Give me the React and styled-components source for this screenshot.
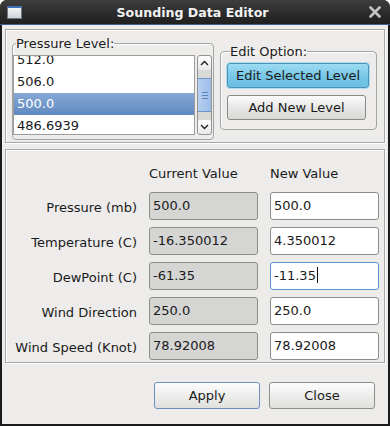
import React from 'react';
import styled, { createGlobalStyle, css } from 'styled-components';

const GlobalStyle = createGlobalStyle`
    html, body {
        margin: 0;
        padding: 0;
        background: #ffffff;
    }
    body {
        font-family: "DejaVu Sans", "Liberation Sans", sans-serif;
        font-size: 13px;
        color: #1a1a1a;
    }
`;

const levels = ['512.0', '506.0', '500.0', '486.6939'];

const rows = [
    { label: 'Pressure (mb)', current: '500.0', next: '500.0' },
    { label: 'Temperature (C)', current: '-16.350012', next: '4.350012' },
    { label: 'DewPoint (C)', current: '-61.35', next: '-11.35', active: true },
    { label: 'Wind Direction', current: '250.0', next: '250.0' },
    { label: 'Wind Speed (Knot)', current: '78.92008', next: '78.92008' },
];

const App = () => (
    <>
        <GlobalStyle />
        <Window>
            <TitleBar>
                <WindowIcon />
                <Title>Sounding Data Editor</Title>
                <CloseIcon width="12" height="12" viewBox="0 0 12 12">
                    <path d="M1.5 1.5 L10.5 10.5 M10.5 1.5 L1.5 10.5" stroke="#c4c4c4" strokeWidth="2.6" strokeLinecap="round" />
                </CloseIcon>
            </TitleBar>
            <Body>
                <TopPanel>
                    <LevelGroup>
                        <Legend>Pressure Level:</Legend>
                        <ListRow>
                            <ListBox>
                                <ListInner>
                                    {levels.map(level => (
                                        <ListItem key={level} selected={level === '500.0'}>{level}</ListItem>
                                    ))}
                                </ListInner>
                            </ListBox>
                            <ScrollBar>
                                <ArrowButton>
                                    <svg width="9" height="6" viewBox="0 0 9 6">
                                        <path d="M1 5 L4.5 1.5 L8 5" stroke="#222" strokeWidth="1.4" fill="none" />
                                    </svg>
                                </ArrowButton>
                                <Track>
                                    <Thumb>
                                        <Grip />
                                        <Grip />
                                        <Grip />
                                    </Thumb>
                                </Track>
                                <ArrowButton>
                                    <svg width="9" height="6" viewBox="0 0 9 6">
                                        <path d="M1 1 L4.5 4.5 L8 1" stroke="#222" strokeWidth="1.4" fill="none" />
                                    </svg>
                                </ArrowButton>
                            </ScrollBar>
                        </ListRow>
                    </LevelGroup>
                    <EditGroup>
                        <Legend>Edit Option:</Legend>
                        <Button primary width={142}>Edit Selected Level</Button>
                        <Button width={139}>Add New Level</Button>
                    </EditGroup>
                </TopPanel>
                <ValuePanel>
                    <span />
                    <ColumnHead>Current Value</ColumnHead>
                    <ColumnHead>New Value</ColumnHead>
                    {rows.map(row => (
                        <React.Fragment key={row.label}>
                            <FieldLabel>{row.label}</FieldLabel>
                            <Field readOnlyStyle>{row.current}</Field>
                            <Field active={row.active}>
                                {row.next}
                                {row.active && <Caret />}
                            </Field>
                        </React.Fragment>
                    ))}
                </ValuePanel>
                <Actions>
                    <ActionButton isDefault>Apply</ActionButton>
                    <ActionButton>Close</ActionButton>
                </Actions>
            </Body>
        </Window>
    </>
);

const Window = styled.div`
    width: 390px;
    height: 426px;
    box-sizing: border-box;
    background: #1b1b1b;
    border-radius: 7px 7px 0 0;
    padding: 0 2px 2px 2px;
    display: flex;
    flex-direction: column;
    overflow: hidden;
`;

const TitleBar = styled.div`
    height: 24px;
    flex-shrink: 0;
    margin: 0 -2px;
    padding: 0 9px 0 7px;
    display: flex;
    align-items: center;
    background: linear-gradient(#3e3e3e, #2a2a2a 60%, #202020);
    border-bottom: 1px solid #3f5f8c;
`;

const WindowIcon = styled.div`
    width: 13px;
    height: 10px;
    background: linear-gradient(#f4f4f4, #cfd4da);
    border: 1px solid #6f7782;
    border-top: 2px solid #3f6fb8;
`;

const Title = styled.div`
    flex: 1;
    text-align: center;
    color: #f2f2f2;
    font-weight: bold;
    font-size: 12.6px;
    padding-right: 6px;
`;

const CloseIcon = styled.svg`
    display: block;
`;

const Body = styled.div`
    flex: 1;
    background: #edeceb;
    padding: 4px 3px 0 3px;
    display: flex;
    flex-direction: column;
`;

const etched = css`
    border: 1px solid #a8a8a6;
    box-shadow: inset 1px 1px 0 #ffffff, 1px 1px 0 #ffffff;
`;

const TopPanel = styled.div`
    ${etched};
    height: 114px;
    box-sizing: border-box;
    display: flex;
    align-items: flex-start;
    padding: 0 0 0 6px;
`;

const Group = styled.fieldset`
    margin: 0;
    border: 1px solid #a4a4a2;
    border-radius: 4px;
    box-shadow: 1px 1px 0 #ffffff inset;
    min-width: 0;
`;

const Legend = styled.legend`
    padding: 0;
    margin-left: 3px;
    font-size: 13px;
    line-height: 15px;
    color: #1a1a1a;
`;

const LevelGroup = styled(Group)`
    width: 202px;
    height: 104px;
    box-sizing: border-box;
    padding: 4px 0 0 0;
    margin-top: 6px;
`;

const ListRow = styled.div`
    display: flex;
    gap: 2px;
`;

const ListBox = styled.div`
    width: 182px;
    height: 80px;
    box-sizing: border-box;
    border: 1px solid #9c9c9a;
    background: #ffffff;
    overflow: hidden;
`;

const ListInner = styled.div`
    margin-top: -7px;
`;

const ListItem = styled.div`
    height: 22px;
    line-height: 22px;
    padding-left: 3px;
    font-size: 13px;
    color: ${p => (p.selected ? '#ffffff' : '#1a1a1a')};
    background: ${p => (p.selected ? 'linear-gradient(#86a9d6, #5f89c0)' : 'transparent')};
`;

const ScrollBar = styled.div`
    width: 15px;
    height: 80px;
    box-sizing: border-box;
    border: 1px solid #939391;
    border-radius: 3px;
    background: #d9d9d7;
    display: flex;
    flex-direction: column;
    overflow: hidden;
`;

const ArrowButton = styled.div`
    height: 14px;
    flex-shrink: 0;
    background: linear-gradient(#ffffff, #e8e8e8);
    display: flex;
    align-items: center;
    justify-content: center;
    border-radius: 2px;
`;

const Track = styled.div`
    flex: 1;
    padding: 8px 0 8px 0;
    display: flex;
`;

const Thumb = styled.div`
    flex: 1;
    background: linear-gradient(90deg, #b6cff0, #9dbde8);
    border: 1px solid #6d95cc;
    border-left: none;
    border-right: none;
    display: flex;
    flex-direction: column;
    align-items: center;
    justify-content: center;
    gap: 2px;
`;

const Grip = styled.div`
    width: 6px;
    height: 1px;
    background: #5e86bd;
`;

const EditGroup = styled(Group)`
    width: 157px;
    height: 86px;
    box-sizing: border-box;
    margin: 14px 0 0 6px;
    padding: 4px 0 0 6px;
    display: flex;
    flex-direction: column;
    gap: 7px;
`;

const Button = styled.div`
    width: ${p => p.width}px;
    height: 25px;
    box-sizing: border-box;
    border-radius: 3px;
    border: 1px solid ${p => (p.primary ? '#4a93b8' : '#8a8a88')};
    background: ${p => (p.primary
        ? 'linear-gradient(#9ddcf3, #76c6e6 55%, #6abfe2)'
        : 'linear-gradient(#fbfbfb, #e6e6e5 55%, #d9d9d8)')};
    box-shadow: ${p => (p.primary ? '0 0 0 1px #aedcf0' : 'none')};
    display: flex;
    align-items: center;
    justify-content: center;
    font-size: 13px;
    color: #1a1a1a;
`;

const ValuePanel = styled.div`
    ${etched};
    margin-top: 6px;
    height: 214px;
    box-sizing: border-box;
    padding: 16px 7px 0 1px;
    display: grid;
    grid-template-columns: 130px 109px 109px;
    grid-template-rows: 19px;
    grid-auto-rows: 28px;
    column-gap: 12px;
    row-gap: 7px;
    align-items: center;
`;

const ColumnHead = styled.div`
    align-self: start;
    line-height: 15px;
    font-size: 13px;
`;

const FieldLabel = styled.div`
    text-align: right;
    font-size: 13px;
    padding-top: 3px;
`;

const Field = styled.div`
    height: 28px;
    box-sizing: border-box;
    border-radius: 3px;
    border: 1px solid ${p => (p.active ? '#5b8ed0' : '#8c8c8a')};
    background: ${p => (p.readOnlyStyle ? '#d5d5d4' : '#ffffff')};
    padding: 0 3px 2px 3px;
    display: flex;
    align-items: center;
    font-size: 13px;
`;

const Caret = styled.span`
    display: inline-block;
    width: 1px;
    height: 16px;
    background: #111;
    margin-left: 1px;
`;

const Actions = styled.div`
    display: flex;
    justify-content: flex-end;
    gap: 9px;
    padding: 19px 10px 0 0;
`;

const ActionButton = styled.div`
    width: 106px;
    height: 27px;
    box-sizing: border-box;
    border-radius: 3px;
    border: 1px solid ${p => (p.isDefault ? '#6d8fbd' : '#8e8e8c')};
    background: linear-gradient(#fcfcfc, #ececeb 55%, #e0e0df);
    display: flex;
    align-items: center;
    justify-content: center;
    font-size: 13px;
    color: #1a1a1a;
`;

export default App;
